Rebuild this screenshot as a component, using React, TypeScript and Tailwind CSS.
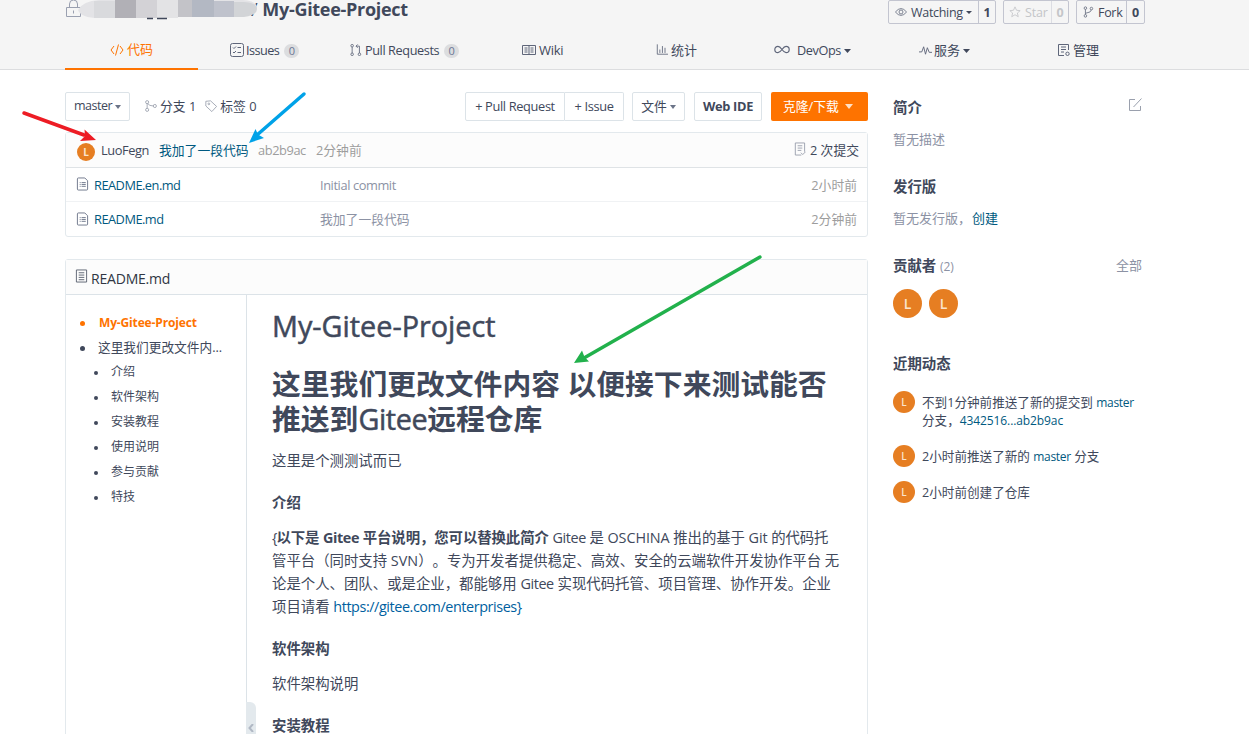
import type { ReactNode } from 'react';

const files = [
  { name: 'README.en.md', message: 'Initial commit', time: '2小时前' },
  { name: 'README.md', message: '我加了一段代码', time: '2分钟前' },
];

const toc = ['介绍', '软件架构', '安装教程', '使用说明', '参与贡献', '特技'];

function Caret({ className = 'w-[7px] h-[4px]' }: { className?: string }) {
  return (
    <svg viewBox="0 0 8 4" preserveAspectRatio="none" className={`shrink-0 ${className}`} fill="currentColor">
      <path d="M0 0h8L4 4z" />
    </svg>
  );
}

function Icon({ children, className = 'w-[14px] h-[14px]' }: { children: ReactNode; className?: string }) {
  return (
    <svg viewBox="0 0 14 14" className={`shrink-0 ${className}`} fill="none" stroke="currentColor" strokeWidth="1">
      {children}
    </svg>
  );
}

function FileIcon() {
  return (
    <Icon className="h-[14px] w-[13px] text-[#6b7488]">
      <path d="M1.500 1.500v11q0 1 1 1h9q1 0 1-1V3.500L9.500.500h-7q-1 0-1 1z" />
      <path d="M4 5.500h1M6 5.500h4.500M4 7.500h1M6 7.500h4.500M4 9.500h1M6 9.500h4.500" />
    </Icon>
  );
}

function Avatar({ className }: { className: string }) {
  return (
    <span className={`flex shrink-0 items-center justify-center rounded-full bg-[#e67e22] text-[#fbe3cc] ${className}`}>L</span>
  );
}

function Badge({ className }: { className: string }) {
  return (
    <span className={`flex h-[14px] w-[15px] items-center justify-center rounded-full bg-[#dcdddf] text-[11px] text-[#6b7795] ${className}`}>0</span>
  );
}

function Header() {
  return (
    <header className="h-[70px] border-b border-[#dcdddf] bg-[#f5f5f5] pl-[65px]">
      <div className="flex h-[32px] w-[1080px] items-start">
        <div className="relative flex h-[19px] items-center">
          <svg viewBox="0 0 18 20" className="h-[20px] w-[18px] text-[#9aa0b0]" fill="none" stroke="currentColor">
            <path d="M1.500 7.500h14v9h-14zM4.500 7V4a4 4 0 0 1 8 0V7M8.500 10.500v3" />
          </svg>
          <svg viewBox="0 0 180 20" className="absolute left-[12px] top-0 h-[20px] w-[180px]">
            <path d="M1 10Q6 1 22 0h144q14 1 14 8t-14 8L22 18Q4 18 1 10z" fill="#e3e3e6" />
            <path d="M17 1h21v17H17z" fill="#d9dadd" />
            <path d="M38 0h21v18H38z" fill="#b1b0b6" />
            <path d="M59 0h21v18H59z" fill="#d3d2d6" />
            <path d="M80 0h21v18H80z" fill="#e3e3e5" />
            <path d="M101 0h21v17h-21z" fill="#c3c3c8" />
            <path d="M115 0h22v17h-22z" fill="#b3b8c3" />
            <path d="M137 1h20v16h-20z" fill="#bfc2cc" />
            <path d="M157 2h10q13 1 13 7t-13 8h-10z" fill="#d2d4d7" />
            <path d="M70 18.500h6M80 18.500h10" stroke="#40485b" strokeWidth="1.500" />
          </svg>
          <h2 className="ml-[168px] whitespace-nowrap text-[18px] font-bold leading-[19px] tracking-[-0.3px]">
            <span className="mr-[5px] font-normal">/</span>My-Gitee-Project
          </h2>
        </div>
        <div className="ml-auto flex h-[24px] shrink-0 text-[12.500px] leading-[23px]">
          <div className="flex w-[108px] rounded-[2px] border border-[#c3c5d0]">
            <div className="flex flex-1 items-center pl-[6px]">
              <Icon className="h-[12px] w-[12px] text-[#6b7183]">
                <path d="M.5 7Q7-1 13.500 7Q7 15 .5 7z" />
                <circle cx="7" cy="7" r="2.300" />
              </Icon>
              <span className="ml-[4px] tracking-[-0.3px]">Watching</span>
              <Caret className="ml-[3px] h-[3px] w-[6px]" />
            </div>
            <b className="w-[17px] border-l border-[#c3c5d0] text-center">1</b>
          </div>
          <div className="ml-[7px] flex w-[66px] rounded-[2px] border border-[#c3c5d0] text-[#c4c6c9]">
            <div className="flex flex-1 items-center pl-[5px]">
              <Icon className="h-[12px] w-[12px]">
                <path d="M7 1l1.800 4 4.200.4-3.200 2.800 1 4.300L7 10.200l-3.800 2.300 1-4.300L1 5.400 5.200 5z" />
              </Icon>
              <span className="ml-[4px] tracking-[-0.2px]">Star</span>
            </div>
            <b className="w-[17px] border-l border-[#dcdde3] text-center">0</b>
          </div>
          <div className="ml-[7px] flex w-[69px] rounded-[2px] border border-[#c3c5d0]">
            <div className="flex flex-1 items-center pl-[5px]">
              <Icon className="h-[12px] w-[12px] text-[#6b7183]">
                <circle cx="4" cy="2.500" r="1.500" />
                <circle cx="4" cy="11.500" r="1.500" />
                <circle cx="11" cy="3" r="1.500" />
                <path d="M4 4v6M11 4.500q0 3-7 4" />
              </Icon>
              <span className="ml-[4px] tracking-[-0.3px]">Fork</span>
            </div>
            <b className="w-[18px] border-l border-[#c3c5d0] text-center">0</b>
          </div>
        </div>
      </div>

      <nav className="flex h-[38px] whitespace-nowrap text-[13px]">
        <a className="mr-[32px] flex w-[133px] items-center justify-center border-b-2 border-[#fe7300] text-[#fe7300]">
          <Icon className="mr-[3px] h-[14px] w-[14px]">
            <path d="M4 3L1 7l3 4M10 3l3 4-3 4M8.500 1.500l-3 11" />
          </Icon>
          代码
        </a>
        <a className="flex w-[120px] items-center">
          <Icon className="mb-[3px] mr-[2px] h-[14px] w-[14px] text-[#5f667a]">
            <rect x=".5" y=".5" width="13" height="13" rx="2" />
            <path d="M3 4.500l1 1 2-2M3 9l1 1 2-2M7.500 4.500H11M7.500 9.500H11" />
          </Icon>
          <span className="text-[12.700px] tracking-[-0.550px]">Issues</span>
          <Badge className="ml-[5px]" />
        </a>
        <a className="flex w-[172px] items-center">
          <Icon className="mb-[3px] mr-[3px] h-[12px] w-[12px] text-[#5f667a]">
            <circle cx="2.500" cy="2" r="1.500" />
            <circle cx="2.500" cy="12" r="1.500" />
            <circle cx="11" cy="12" r="1.500" />
            <path d="M2.500 3.500v7M11 10.500v-8H7M9 .5l-2 2 2 2" />
          </Icon>
          <span className="text-[12.700px] tracking-[-0.400px]">Pull Requests</span>
          <Badge className="ml-[5px]" />
        </a>
        <a className="flex w-[134px] items-center">
          <Icon className="mb-[3px] mr-[3px] h-[14px] w-[14px] text-[#5f667a]">
            <path d="M.5 2.500h13v9H.5zM7 2.500v9M2.500 5h3M2.500 7h3M2.500 9h3M8.500 5h3M8.500 7h3M8.500 9h3" />
          </Icon>
          <span className="tracking-[-0.3px]">Wiki</span>
        </a>
        <a className="flex w-[118px] items-center">
          <Icon className="mb-[3px] mr-[3px] h-[13px] w-[12px] text-[#5f667a]">
            <path d="M1.500 1v11.500H14M4.500 11V7M7.500 11V3M10.500 11V5" />
          </Icon>
          统计
        </a>
        <a className="flex w-[145px] items-center">
          <svg viewBox="0 0 17 10" className="mb-[3px] mr-[7px] h-[9px] w-[16px] text-[#5f667a]" fill="none" stroke="currentColor" strokeWidth="1.300">
            <path d="M8.500 5Q6 1.500 4 1.500a3.500 3.500 0 0 0 0 7Q6 8.500 8.500 5Q11 1.500 13 1.500a3.500 3.500 0 0 1 0 7Q11 8.500 8.500 5z" />
          </svg>
          <span className="text-[12.700px] tracking-[-0.400px]">DevOps</span>
          <Caret className="ml-[3px] h-[4px] w-[7px]" />
        </a>
        <a className="flex w-[138px] items-center">
          <Icon className="mb-[1px] mr-[2px] h-[13px] w-[13px] text-[#5f667a]">
            <path d="M0 8.500h3L5 3l2 8 2-7 2 5h3" />
          </Icon>
          服务
          <Caret className="ml-[3px] h-[4px] w-[7px]" />
        </a>
        <a className="flex items-center">
          <Icon className="mb-[3px] mr-[2px] h-[14px] w-[14px] text-[#5f667a]">
            <path d="M11.500 7V1.500h-10v11H7M4 4h5M4 6.500h5M4 9h3" />
            <circle cx="10.500" cy="10.800" r="1.700" />
          </Icon>
          管理
        </a>
      </nav>
    </header>
  );
}

function Toolbar() {
  return (
    <div className="flex h-[29px] items-center whitespace-nowrap text-[12.800px]">
      <button className="flex h-full w-[65px] items-center rounded-[2px] border border-[#dce3e8] pl-[8px]">
        <span className="text-[12.500px] tracking-[-0.5px]">master</span>
        <Caret className="ml-[3px] h-[4px] w-[6px] text-[#6b7488]" />
      </button>
      <Icon className="mb-[2px] ml-[15px] h-[12px] w-[12px] text-[#9aa0ad]">
        <circle cx="2.500" cy="2.500" r="1.800" />
        <circle cx="2.500" cy="11.500" r="1.800" />
        <circle cx="11.500" cy="7" r="1.800" />
        <path d="M2.500 4.300v5.400M3 4q2 3 6.700 3" />
      </Icon>
      <span className="ml-[3px]">分支 1</span>
      <Icon className="mb-[2px] ml-[9px] h-[12px] w-[12px] text-[#9aa0ad]">
        <path d="M1 1.500l5.500-.5 7 6.500-5.500 6L1 7z" />
        <circle cx="4.500" cy="4.500" r="1" />
      </Icon>
      <span className="ml-[3px]">标签 0</span>
      <div className="ml-auto flex h-full">
        <button className="w-[100px] rounded-l-[2px] border border-[#dce3e8] tracking-[-0.35px]">+ Pull Request</button>
        <button className="w-[59px] rounded-r-[2px] border border-l-0 border-[#dce3e8] tracking-[-0.35px]">+ Issue</button>
        <button className="ml-[8px] flex w-[53px] items-center justify-center rounded-[2px] border border-[#dce3e8]">
          文件
          <Caret className="ml-[3px] h-[4px] w-[6px] text-[#6b7488]" />
        </button>
        <button className="ml-[9px] w-[68px] rounded-[2px] border border-[#dce3e8] font-bold tracking-[-0.3px]">Web IDE</button>
        <button className="ml-[9px] flex w-[97px] items-center rounded-[2px] bg-[#fe7300] pl-[12px] text-white">
          克隆/下载
          <Caret className="ml-[6px] h-[5px] w-[8px] text-[#ffe0c6]" />
        </button>
      </div>
    </div>
  );
}

function FileList() {
  return (
    <div className="mt-[11px] rounded-[3px] border border-[#e3e9ed] text-[12.800px]">
      <div className="flex h-[35px] items-center border-b border-[#dfe3e6] bg-[#fcfcfc] pl-[11px] pr-[8px] pt-[1px]">
        <Avatar className="mt-[3px] h-[18px] w-[18px] text-[10px] font-bold" />
        <span className="ml-[6px] w-[58px] tracking-[-0.4px]">LuoFegn</span>
        <span className="w-[99px] text-[#005980]">我加了一段代码</span>
        <span className="w-[58px] tracking-[-0.4px] text-[#9d9d9d]">ab2b9ac</span>
        <span className="text-[#9d9d9d]">2分钟前</span>
        <Icon className="mb-[3px] ml-auto h-[14px] w-[13px] text-[#9aa0ad]">
          <path d="M12.500 10V.5h-10v13H9M5 3.500h5M5 6h5M5 8.500h4M8.500 11l2 2 3-3" />
        </Icon>
        <span className="ml-[4px]">2 次提交</span>
      </div>
      {files.map((f, i) => (
        <div key={f.name} className={`flex h-[34px] items-center pl-[10px] pr-[10px] pt-[2px] ${i === 0 ? 'border-b border-[#f0f2f4]' : ''}`}>
          <div className="mb-[3px]">
            <FileIcon />
          </div>
          <span className="ml-[5px] w-[226px] tracking-[-0.5px] text-[#005980]">{f.name}</span>
          <span className={i === 0 ? 'tracking-[-0.4px] text-[#8c92a4]' : 'text-[#8c92a4]'}>{f.message}</span>
          <span className="ml-auto text-[#9d9d9d]">{f.time}</span>
        </div>
      ))}
    </div>
  );
}

function Readme() {
  return (
    <div className="mt-[22px] h-[600px] rounded-t-[3px] border border-[#e3e9ed]">
      <div className="flex h-[35px] items-center border-b border-[#dce3e8] bg-[#fcfcfc] pl-[9px] pt-[3px] text-[14px]">
        <Icon className="-mt-[5px] mr-[3px] h-[14px] w-[13px] text-[#5b6270]">
          <path d="M1.500.5h11v13h-11zM4 3.500h6M4 6h6M4 8.500h6M4 11h6" />
        </Icon>
        <span className="tracking-[-0.2px] text-[#303643]">README.md</span>
      </div>
      <div className="flex h-[560px]">
        <ul className="relative w-[181px] shrink-0 border-r border-[#dce3e8] pt-[15px] text-[12px]">
          <li className="flex h-[25px] items-center font-bold tracking-[-0.15px] text-[#fe7300]">
            <i className="ml-[14px] mr-[14px] mt-[2px] h-[5px] w-[5px] rounded-full bg-[#fe7300]" />
            My-Gitee-Project
          </li>
          <li className="flex h-[24px] items-center pt-[1px] text-[12.700px]">
            <i className="ml-[14px] mr-[13px] mt-[2px] h-[5px] w-[5px] rounded-full bg-[#40485b]" />
            这里我们更改文件内...
          </li>
          {toc.map((t) => (
            <li key={t} className="flex h-[25px] items-center">
              <i className="ml-[28px] mr-[13px] mt-[2px] h-[4px] w-[4px] rounded-full bg-[#40485b]" />
              {t}
            </li>
          ))}
          <li className="absolute left-[180px] top-[407px] h-[60px] w-[10px] rounded-r-[6px] bg-[#e3e9ed]">
            <svg viewBox="0 0 6 8" className="ml-[2px] mt-[22px] h-[8px] w-[6px]" fill="none" stroke="#b0b8c4" strokeWidth="2">
              <path d="M5 0L1.500 4 5 8" />
            </svg>
          </li>
        </ul>
        <article className="whitespace-nowrap pl-[25px] pt-[13px] text-[14.400px] leading-[23px] [text-spacing-trim:space-all]">
          <h1 className="text-[28.800px] leading-[35px] [-webkit-text-stroke:0.5px]">My-Gitee-Project</h1>
          <h1 className="mt-[23px] text-[28.800px] font-bold leading-[35px]">
            这里我们更改文件内容 以便接下来测试能否
            <br />
            推送到<span className="font-normal tracking-[-0.4px] [-webkit-text-stroke:0.5px]">Gitee</span>远程仓库
          </h1>
          <p className="mt-[13px]">这里是个测测试而已</p>
          <h4 className="mt-[19px] font-bold">介绍</h4>
          <p className="mt-[12px]">
            <span className="tracking-[-0.080px]">
              <span className="tracking-[-1px]">{'{'}</span>
              <b>以下是 <span className="tracking-[-0.4px]">Gitee</span> 平台说明，您可以替换此简介</b>{' '}
              <span className="tracking-[-0.4px]">Gitee</span> 是 OSCHINA 推出的基于 Git 的代码托
            </span>
            <br />
            管平台（同时支持 SVN）。专为开发者提供稳定、高效、安全的云端软件开发协作平台 无
            <br />
            论是个人、团队、或是企业，都能够用 <span className="tracking-[-0.4px]">Gitee</span> 实现代码托管、项目管理、协作开发。企业
            <br />
            项目请看 <a className="tracking-[-0.43px] text-[#005fa0]">https://gitee.com/enterprises{'}'}</a>
          </p>
          <h4 className="mt-[19px] font-bold">软件架构</h4>
          <p className="mt-[12px]">软件架构说明</p>
          <h4 className="mt-[19px] font-bold">安装教程</h4>
        </article>
      </div>
    </div>
  );
}

function Sidebar() {
  return (
    <aside className="ml-[25px] w-[249px] text-[13px] leading-[18px]">
      <div className="flex h-[30px] items-center justify-between">
        <h3 className="pt-[1px] text-[14.400px] font-bold">简介</h3>
        <Icon className="mb-[4px] h-[14px] w-[14px] text-[#9aa0ad]">
          <path d="M7 1.500H1.500v11h11V8M5.500 9L13.500.5" />
        </Icon>
      </div>
      <p className="mt-[8px] text-[#8c92a4]">暂无描述</p>
      <h3 className="mt-[30px] text-[14.400px] font-bold">发行版</h3>
      <p className="mt-[13px] text-[#8c92a4]">
        暂无发行版，<span className="ml-[1px] text-[#005980]">创建</span>
      </p>
      <div className="mt-[30px] flex justify-between text-[#8c92a4]">
        <h3 className="text-[14.400px] font-bold text-[#40485b]">
          贡献者 <span className="text-[12px] font-normal text-[#8c92a4]">(2)</span>
        </h3>
        <span className="-mt-[1px]">全部</span>
      </div>
      <div className="mt-[13px] flex gap-[7px]">
        <Avatar className="h-[29px] w-[29px] text-[14px] font-semibold" />
        <Avatar className="h-[29px] w-[29px] text-[14px] font-semibold" />
      </div>
      <h3 className="mt-[37px] text-[14.400px] font-bold">近期动态</h3>
      <div className="mt-[18px] flex gap-[7px] whitespace-nowrap text-[12.600px]">
        <Avatar className="h-[22px] w-[22px] text-[10px] font-semibold" />
        <p className="pt-[3px]">
          不到1分钟前推送了新的提交到 <span className="text-[12px] tracking-[-0.3px] text-[#005980]">master</span>
          <br />
          分支，<span className="text-[12px] tracking-[-0.1px] text-[#005980]">4342516...ab2b9ac</span>
        </p>
      </div>
      <div className="mt-[15px] flex h-[22px] items-center gap-[7px] whitespace-nowrap text-[12.600px]">
        <Avatar className="h-[22px] w-[22px] text-[10px] font-semibold" />
        <p className="pt-[1px]">2小时前推送了新的 <span className="text-[12px] tracking-[-0.3px] text-[#005980]">master</span> 分支</p>
      </div>
      <div className="mt-[14px] flex h-[22px] items-center gap-[7px] whitespace-nowrap text-[12.600px]">
        <Avatar className="h-[22px] w-[22px] text-[10px] font-semibold" />
        <p className="pt-[1px]">2小时前创建了仓库</p>
      </div>
    </aside>
  );
}

function Arrows() {
  return (
    <svg viewBox="0 0 1249 734" className="pointer-events-none absolute left-0 top-0 h-[734px] w-[1249px]" strokeLinecap="round">
      <path d="M24 113L84 135" stroke="#ed1c24" strokeWidth="3.500" />
      <path d="M96 140L84.500 129.500 85 136 80 141z" fill="#ed1c24" />
      <path d="M304 94L257 135" stroke="#00a2e8" strokeWidth="3.500" />
      <path d="M249 143L255.500 129 258 134.500 264 138z" fill="#00a2e8" />
      <path d="M760 257L584 358" stroke="#22b14c" strokeWidth="3.500" />
      <path d="M574 363L582 350.500 584.500 357 589 361.500z" fill="#22b14c" />
    </svg>
  );
}

export default function App() {
  return (
    <div className="relative h-[734px] w-[1249px] overflow-hidden bg-white font-['Open_Sans','Noto_Sans_CJK_SC',sans-serif] text-[#40485b]">
      <Header />
      <main className="flex pl-[65px] pt-[22px]">
        <div className="w-[803px]">
          <Toolbar />
          <FileList />
          <Readme />
        </div>
        <Sidebar />
      </main>
      <Arrows />
    </div>
  );
}
